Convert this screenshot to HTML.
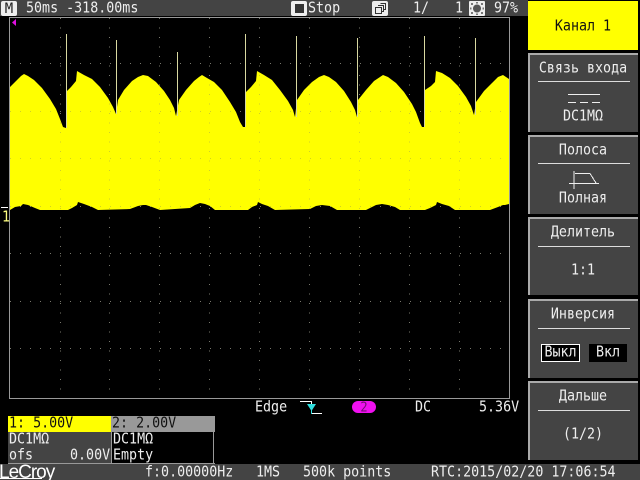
<!DOCTYPE html>
<html><head><meta charset="utf-8"><style>
html,body{margin:0;padding:0;background:#000}
#s{position:relative;width:640px;height:480px;overflow:hidden;background:#000;font-family:"DejaVu Sans Mono","Liberation Mono",monospace;font-size:13.33px;color:#eee}
.a{position:absolute;white-space:pre;line-height:16px;height:16px;transform:scaleY(1.12)}
.c{position:absolute;left:528px;width:110px;text-align:center;white-space:pre;line-height:16px;transform:scaleY(1.12)}
.b{position:absolute;left:528px;width:110px;background:#444;border-top:2px solid #aaa;border-left:2px solid #aaa;box-sizing:border-box}
.l{position:absolute;left:538px;width:92px;height:1px;background:#ddd}
</style></head><body><div id="s">
<div style="position:absolute;left:0;top:0;width:528px;height:16px;background:#444"></div>
<div style="position:absolute;left:0;top:464px;width:640px;height:16px;background:#444"></div>

<svg style="position:absolute;left:0;top:0" width="640" height="480" viewBox="0 0 640 480">
<g stroke="#77776c" stroke-width="1" fill="none" shape-rendering="crispEdges" stroke-dasharray="1 9">
<path d="M10 63.5H509M10 111.5H509M10 158.5H509M10 206.5H509M10 253.5H509M10 301.5H509M10 348.5H509"/>
</g>
<g stroke="#77776c" stroke-width="1" fill="none" shape-rendering="crispEdges" stroke-dasharray="1 8.5">
<path d="M60.5 18V398M109.5 18V398M159.5 18V398M209.5 18V398M259.5 18V398M309.5 18V398M359.5 18V398M409.5 18V398M459.5 18V398"/>
</g>
<path fill="#ffff00" d="M10 87 L16 81 L21 76 L24 74 L28 76 L34 80 L42 88 L50 99 L56 109 L60 119 L63 127 L66 128 L66 92 L71 87 L76 81 L77 71 L84 75 L92 79 L100 87 L108 98 L113 107 L116 114 L118 100 L124 90 L132 81 L138 77 L143 75 L148 76 L156 82 L164 91 L170 100 L174 108 L176 116 L179 100 L186 90 L194 81 L199 77 L202 75 L207 78 L214 82 L222 90 L230 102 L236 112 L240 122 L243 127 L246 127 L246 92 L251 87 L256 81 L257 71 L264 75 L272 80 L280 90 L288 101 L293 110 L295 117 L297 100 L304 90 L312 82 L319 77 L324 75 L329 77 L336 82 L344 91 L351 102 L355 110 L357 117 L358 100 L366 90 L374 81 L380 77 L383 75 L388 77 L396 83 L404 92 L412 104 L416 112 L420 123 L422 127 L424 127 L425 90 L431 86 L435 82 L436 71 L442 73 L450 78 L458 86 L466 97 L471 106 L474 115 L476 102 L484 91 L492 83 L498 77 L503 75 L509 79 L509 204 L505 205 L503 205 L498 207 L490 210 L455 210 L449 206 L442 204 L437 202 L436 205 L430 208 L425 210 L400 210 L395 207 L388 205 L382 204 L376 205 L370 208 L366 210 L337 210 L330 206 L322 205 L316 206 L310 209 L275 210 L268 206 L262 204 L258 202 L257 205 L252 207 L248 210 L215 210 L210 206 L205 204 L200 203 L195 205 L190 208 L160 210 L152 207 L146 205 L143 205 L138 206 L130 209 L98 210 L92 207 L84 204 L78 202 L77 205 L72 208 L68 210 L40 210 L35 208 L28 205 L23 204 L21 206 L15 207 L10 210 Z"/>
<g stroke="#d8d8a0" stroke-width="1" shape-rendering="crispEdges">
<path d="M66.5 34V128M116.5 40V114M177.5 52V116M245.5 34V127M296.5 36V117M357.5 38V117M424.5 36V127M475.5 38V115"/>
</g>
<g stroke="#77776c" stroke-opacity=".35" stroke-width="1" fill="none" shape-rendering="crispEdges" stroke-dasharray="1 9">
<path d="M10 111.5H509M10 158.5H509M10 206.5H509"/>
</g>
<g stroke="#77776c" stroke-opacity=".35" stroke-width="1" fill="none" shape-rendering="crispEdges" stroke-dasharray="1 8.5">
<path d="M60.5 18V210M109.5 18V210M159.5 18V210M209.5 18V210M259.5 18V210M309.5 18V210M359.5 18V210M409.5 18V210M459.5 18V210"/>
</g>
<path d="M9.5 17.5H509.5V398.5H9.5Z" fill="none" stroke="#999" shape-rendering="crispEdges"/>
<path d="M16 19V26L12 22.5Z" fill="#e010e0"/>
<path d="M1 207.5H8" stroke="#fff"/>
<path d="M300 401.5H311.5V413.5H322" fill="none" stroke="#fff" shape-rendering="crispEdges"/>
<path d="M307 404H316L311.5 411Z" fill="#30e0e0"/><path d="M311.5 404V414" stroke="#30e0e0"/>
<rect x="352" y="401" width="24" height="12" rx="6" fill="#f010f0"/>
<!-- Stop -->
<rect x="291" y="1" width="16" height="15" rx="2" fill="#eee"/><rect x="295" y="4" width="9" height="9" fill="#333"/>
<!-- layers -->
<rect x="372" y="1" width="16" height="15" rx="2" fill="#eee"/>
<path d="M380.5 3.5H385.5V9.5H383.5M378 5.5H383.5V11.5H381.5M375.5 7.5H381.5V13.5H375.5Z" fill="none" stroke="#333" shape-rendering="crispEdges"/>
<!-- sun -->
<rect x="469" y="1" width="16" height="15" rx="1" fill="#eee"/><circle cx="477" cy="8.5" r="4" fill="#555"/>
<path d="M471 3H473V5H471ZM481 3H483V5H481ZM471 12H473V14H471ZM481 12H483V14H481ZM476 2H478V3.5H476ZM476 13.5H478V15H476ZM470 7.5H471.5V9.5H470ZM482.5 7.5H484V9.5H482.5Z" fill="#777"/>
</svg>

<div class="a" style="left:2px;top:210px;color:#ffff80">1</div>

<!-- M badge -->
<div class="a" style="left:1px;top:1px;width:16px;height:15px;background:#eee;color:#222;text-align:center;border-radius:2px;line-height:16px;font-size:14px;transform:none">M</div>
<div class="a" style="left:26px;top:1px">50ms -318.00ms</div>
<div class="a" style="left:308px;top:1px">Stop</div>
<div class="a" style="left:413px;top:1px">1/</div>
<div class="a" style="left:455px;top:1px">1</div>
<div class="a" style="left:494px;top:1px">97%</div>

<!-- Menu -->
<div style="position:absolute;left:528px;top:1px;width:110px;height:49px;background:#ffff00"></div>
<div class="c" style="top:19px;color:#111">Канал 1</div>
<div class="b" style="top:53px;height:79px"></div>
<div class="b" style="top:135px;height:79px"></div>
<div class="b" style="top:217px;height:78px"></div>
<div class="b" style="top:299px;height:79px"></div>
<div class="b" style="top:381px;height:79px"></div>
<div class="c" style="top:61px">Связь входа</div><div class="l" style="top:81px"></div>
<svg style="position:absolute;left:560px;top:90px" width="50" height="16"><path d="M8 4.5H40M8 12.5H16M20 12.5H28M32 12.5H40" stroke="#eee" shape-rendering="crispEdges"/></svg>
<div class="c" style="top:109px">DC1MΩ</div>
<div class="c" style="top:143px">Полоса</div><div class="l" style="top:163px"></div>
<svg style="position:absolute;left:565px;top:168px" width="40" height="24"><path d="M9 3V21M4 15.5H34M10 5.5H25L31 15" fill="none" stroke="#eee" shape-rendering="crispEdges"/></svg>
<div class="c" style="top:191px">Полная</div>
<div class="c" style="top:225px">Делитель</div><div class="l" style="top:246px"></div>
<div class="c" style="top:263px">1:1</div>
<div class="c" style="top:307px">Инверсия</div><div class="l" style="top:328px"></div>
<div style="position:absolute;left:541px;top:344px;width:37px;height:16px;background:#000;border:1px solid #fff"></div>
<div class="a" style="left:541px;top:345px;width:39px;text-align:center">Выкл</div>
<div style="position:absolute;left:589px;top:344px;width:38px;height:18px;background:#000"></div>
<div class="a" style="left:589px;top:345px;width:38px;text-align:center">Вкл</div>
<div class="c" style="top:389px">Дальше</div><div class="l" style="top:410px"></div>
<div class="c" style="top:427px">(1/2)</div>

<!-- Trigger -->
<div class="a" style="left:255px;top:400px">Edge</div>
<div class="a" style="left:352px;top:399px;width:24px;text-align:center;color:#701070;font-size:12px">2</div>
<div class="a" style="left:415px;top:400px">DC</div>
<div class="a" style="left:479px;top:400px">5.36V</div>

<!-- Channel boxes -->
<div style="position:absolute;left:8px;top:416px;width:103px;height:16px;background:#ffff00"></div>
<div style="position:absolute;left:111px;top:416px;width:104px;height:16px;background:#999"></div>
<div style="position:absolute;left:8px;top:432px;width:103px;height:31px;background:#444"></div>
<div style="position:absolute;left:111px;top:432px;width:103px;height:31px;background:#000;border-right:1px solid #999;border-left:1px solid #999;box-sizing:border-box"></div>
<div style="position:absolute;left:8px;top:463px;width:207px;height:1px;background:#999"></div>
<div class="a" style="left:9px;top:416px;color:#111">1: 5.00V</div>
<div class="a" style="left:112px;top:416px;color:#111">2: 2.00V</div>
<div class="a" style="left:9px;top:432px">DC1MΩ</div>
<div class="a" style="left:113px;top:432px">DC1MΩ</div>
<div class="a" style="left:9px;top:448px">ofs</div>
<div class="a" style="left:70px;top:448px">0.00V</div>
<div class="a" style="left:113px;top:448px">Empty</div>

<!-- Bottom -->
<div class="a" style="left:-1px;top:463px;font-family:'Liberation Sans',sans-serif;font-size:19px;letter-spacing:-1px;line-height:20px;height:20px;color:#fff;transform:none">LeCroy</div>
<div style="position:absolute;left:0;top:478px;width:42px;height:1px;background:#fff"></div>
<div class="a" style="left:145px;top:465px">f:0.00000Hz</div>
<div class="a" style="left:256px;top:465px">1MS</div>
<div class="a" style="left:303px;top:465px">500k points</div>
<div class="a" style="left:431px;top:465px">RTC:2015/02/20 17:06:54</div>
</div></body></html>
